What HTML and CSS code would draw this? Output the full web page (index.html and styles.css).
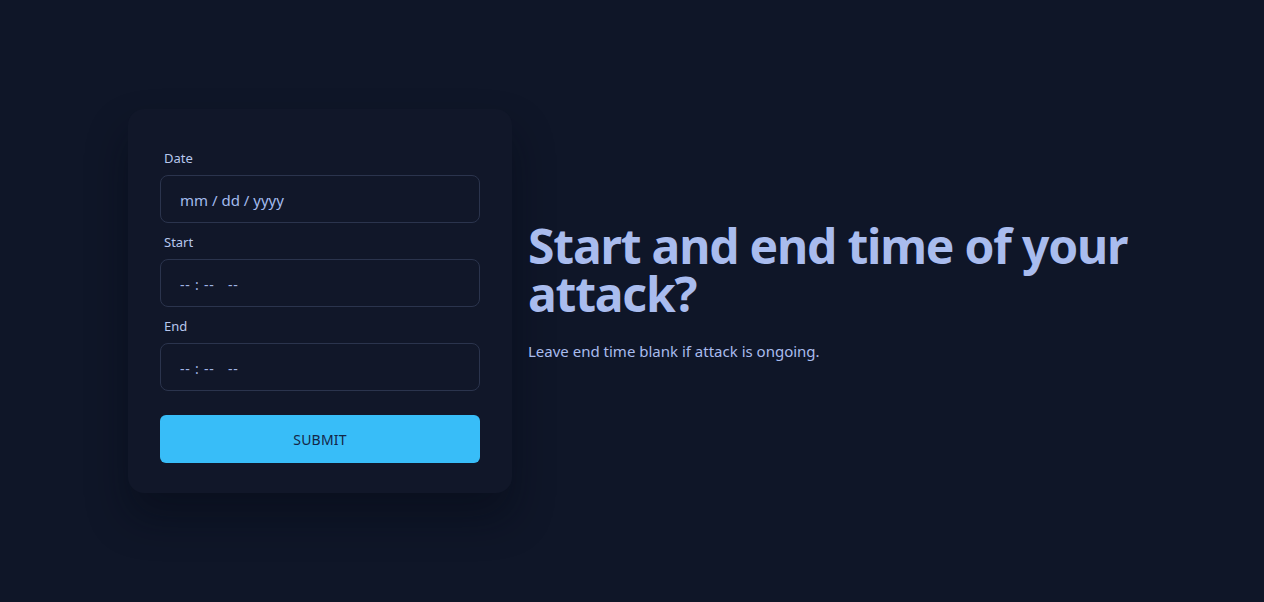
FILE: index.html
```html
<!DOCTYPE html>
<html lang="en">
<head>
<meta charset="utf-8">
<title>Attack time</title>
<link rel="stylesheet" href="styles.css">
</head>
<body>
<main class="page">
  <div class="wrap">
    <form class="card">
      <div class="field">
        <label class="label" for="date">Date</label>
        <input class="input" id="date" type="text" placeholder="mm / dd / yyyy">
      </div>
      <div class="field">
        <label class="label" for="start">Start</label>
        <input class="input time" id="start" type="text" placeholder="-- : --   --">
      </div>
      <div class="field">
        <label class="label" for="end">End</label>
        <input class="input time" id="end" type="text" placeholder="-- : --   --">
      </div>
      <button class="submit" type="button">SUBMIT</button>
    </form>
    <section class="intro">
      <h1 class="title">Start and end time of your attack?</h1>
      <p class="lead">Leave end time blank if attack is ongoing.</p>
    </section>
  </div>
</main>
</body>
</html>
```
FILE: styles.css
```css
* { box-sizing: border-box; }
html, body { margin: 0; height: 100%; }
body {
  background: #0f1628;
  font-family: "Noto Sans", "Open Sans", sans-serif;
  color: #a9bcee;
}
.page {
  height: 100vh;
  display: flex;
  align-items: center;
  justify-content: center;
}
.wrap {
  width: 1008px;
  display: flex;
  align-items: center;
  gap: 16px;
}
.card {
  width: 384px;
  height: 384px;
  flex: none;
  background: #111729;
  border-radius: 16px;
  padding: 40px 32px 31px;
  box-shadow: 0 24px 40px rgba(5, 9, 20, 0.45);
  display: flex;
  flex-direction: column;
}
.field { display: flex; flex-direction: column; margin-bottom: 10px; flex: none; }
.field:last-of-type { margin-bottom: 24px; }
.label {
  font-size: 13px;
  line-height: 18px;
  height: 20px;
  padding-left: 4px;
  margin-bottom: 6px;
  color: #b7c7ee;
}
.input {
  height: 48px;
  width: 100%;
  background: #111729;
  border: 1px solid #2b344d;
  border-radius: 8px;
  padding: 2px 19px 0;
  font-family: inherit;
  font-size: 15px;
  color: #a7bdf0;
  outline: none;
}
.input::placeholder { color: #a3bbee; opacity: 1; }
.input.time::placeholder { color: #9fb3e3; font-size: 14px; letter-spacing: 0.8px; }
.submit {
  height: 48px;
  flex: none;
  border: none;
  border-radius: 6px;
  background: #38bdf8;
  color: #142646;
  font-family: inherit;
  font-size: 14px;
  padding-top: 2px;
  letter-spacing: 0.2px;
}
.intro { flex: 1; }
.title {
  margin: 0;
  font-size: 48px;
  line-height: 48px;
  font-weight: 700;
  letter-spacing: -1.2px;
  color: #a9bcee;
}
.lead {
  margin: 21px 0 18px;
  font-size: 15px;
  line-height: 24px;
  color: #a9bcee;
}
```
